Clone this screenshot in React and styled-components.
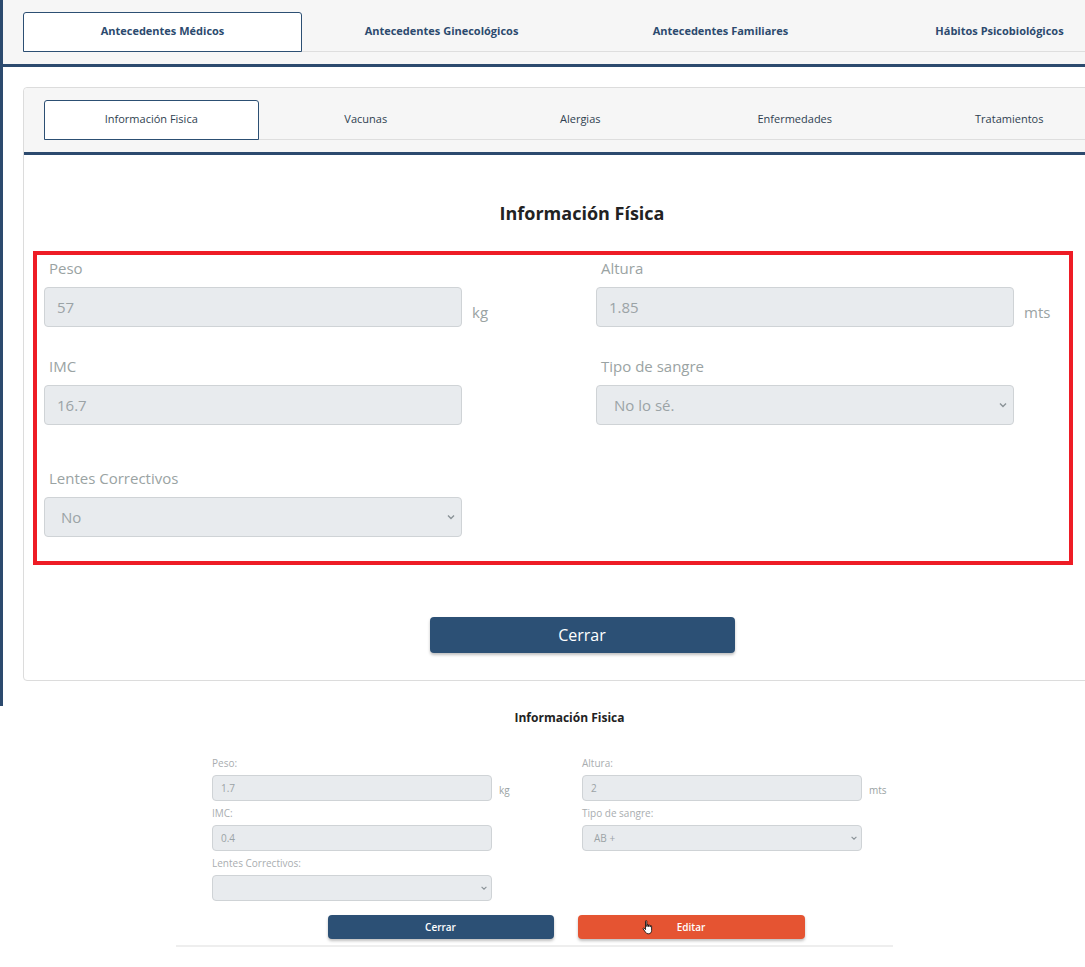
import React from "react";
import styled, { createGlobalStyle } from "styled-components";

const GlobalStyle = createGlobalStyle`
  html, body {
    margin: 0;
    padding: 0;
    background: #fff;
    overflow: hidden;
  }
  body {
    font-family: "Open Sans", "Liberation Sans", sans-serif;
  }
`;

const Page = styled.div`
  width: 1085px;
  height: 967px;
  overflow: hidden;
  background: #fff;
`;

const MainPanel = styled.div`
  width: 1156px;
  border-left: 3px solid #2c4a6e;
  padding-bottom: 25px;
`;

const TopBar = styled.div`
  background: #f6f6f6;
  padding: 12px 20px 0;
  border-bottom: 12px solid #f6f6f6;
  height: 40px;
`;

const TabList = styled.div`
  display: flex;
  border-bottom: 1px solid #dedede;
  height: 39px;
`;

const Tab = styled.div`
  flex: 0 0 ${(p) => p.$w}px;
  display: flex;
  align-items: center;
  justify-content: center;
  box-sizing: border-box;
  padding-bottom: 3px;
  font-size: 11px;
  font-weight: ${(p) => (p.$bold ? 700 : 400)};
  color: ${(p) => (p.$bold ? "#2c4a6e" : "#2f3f50")};
  background: ${(p) => (p.$active ? "#fff" : "transparent")};
  border: 1px solid ${(p) => (p.$active ? "#2c4f73" : "transparent")};
  border-radius: 3px 3px 0 0;
  margin-bottom: -1px;
`;

const BlueRule = styled.div`
  height: 3px;
  background: #2c4a6e;
`;

const Body = styled.div`
  padding: 20px 20px 0;
`;

const Card = styled.div`
  width: 1116px;
  border: 1px solid #dcdcdc;
  border-radius: 4px;
  background: #fff;
  padding-bottom: 27px;
`;

const CardHeader = styled.div`
  background: #f6f6f6;
  padding: 12px 0 0 20px;
  border-bottom: 12px solid #f6f6f6;
  border-radius: 4px 4px 0 0;
`;

const SectionTitle = styled.h2`
  margin: 46px 0 0;
  text-align: center;
  font-size: 18px;
  font-weight: 700;
  color: #222;
  line-height: 24px;
`;

const FormBox = styled.div`
  margin: 26px 0 0 9px;
  width: 1040px;
  box-sizing: border-box;
  border: 4px solid #ee1c25;
  padding: 3px 0 24px 7px;
  display: grid;
  grid-template-columns: 552px 1fr;
  row-gap: ${(p) => p.$gap}px;
`;

const Field = styled.div`
  display: flex;
  flex-direction: column;
  margin-top: ${(p) => p.$mt || 0}px;
`;

const Label = styled.label`
  font-size: ${(p) => (p.$small ? 10 : 15)}px;
  line-height: ${(p) => (p.$small ? 12 : 20)}px;
  color: ${(p) => (p.$small ? "#a9adb0" : "#9aa3a3")};
  padding-left: ${(p) => (p.$small ? 0 : 5)}px;
  margin-bottom: ${(p) => (p.$small ? 6 : 9)}px;
`;

const InputRow = styled.div`
  display: flex;
  align-items: flex-end;
`;

const Control = styled.div`
  width: ${(p) => p.$w}px;
  height: ${(p) => p.$h}px;
  box-sizing: border-box;
  background: #e8ebee;
  border: 1px solid #cfd3d6;
  border-radius: 4px;
  display: flex;
  align-items: center;
  justify-content: space-between;
  padding-right: ${(p) => (p.$small ? 3 : 5)}px;
  padding-left: ${(p) => p.$pl}px;
  font-size: ${(p) => (p.$small ? 10 : 15)}px;
  color: #9ba3a6;
`;

const Unit = styled.span`
  font-size: ${(p) => (p.$small ? 10 : 15)}px;
  color: #9aa3a3;
  margin-left: ${(p) => (p.$small ? 7 : 10)}px;
  padding-bottom: ${(p) => (p.$small ? 4 : 5)}px;
`;

const Chevron = ({ size = 10 }) => (
  <svg width={size} height={size} viewBox="0 0 10 10">
    <path d="M2 3.5 L5 6.5 L8 3.5" fill="none" stroke="#8a9297" strokeWidth="1.4" />
  </svg>
);

const ButtonRow = styled.div`
  display: flex;
  justify-content: center;
  gap: 24px;
  margin-top: ${(p) => p.$mt}px;
  padding-left: ${(p) => p.$pl || 0}px;
`;

const Button = styled.button`
  width: ${(p) => p.$w}px;
  height: ${(p) => p.$h}px;
  border: none;
  border-radius: 4px;
  background: ${(p) => (p.$danger ? "#e55432" : "#2c5075")};
  color: #fff;
  font-family: inherit;
  font-size: ${(p) => p.$fs}px;
  font-weight: ${(p) => (p.$small ? 600 : 500)};
  box-shadow: 0 2px 3px rgba(0, 0, 0, 0.25);
  position: relative;
  cursor: pointer;
`;

const Cursor = styled.span`
  position: absolute;
  left: 64px;
  top: 5px;
  line-height: 0;
`;

const Mini = styled.div`
  width: 717px;
  margin: 4px 0 0 176px;
  border-bottom: 2px solid #eeeeee;
  padding-bottom: 6px;
`;

const MiniTitle = styled.div`
  text-align: center;
  padding-left: 70px;
  font-size: 12px;
  font-weight: 700;
  color: #222;
  line-height: 16px;
`;

const MiniForm = styled.div`
  margin-top: 31px;
  padding-left: 36px;
  display: grid;
  grid-template-columns: 370px 1fr;
  row-gap: 6px;
`;

const HandIcon = () => (
  <svg width="12" height="15" viewBox="0 0 12 15">
    <path
      d="M3.5 1.2c0-.7 1.3-.7 1.3 0v5.3h.3V5c0-.7 1.3-.7 1.3 0v1.5h.3V5.6c0-.7 1.3-.7 1.3 0v1.2h.3v-.6c0-.7 1.3-.7 1.3 0v4.3c0 1.7-1.1 3.3-2.8 3.3H6c-1 0-1.8-.6-2.4-1.5L1.2 9c-.4-.6.4-1.3 1-.8l1.3 1.4z"
      fill="#fff"
      stroke="#000"
      strokeWidth="0.8"
      strokeLinejoin="round"
    />
  </svg>
);

const topTabs = [
  "Antecedentes Médicos",
  "Antecedentes Ginecológicos",
  "Antecedentes Familiares",
  "Hábitos Psicobiológicos",
];

const innerTabs = ["Información Fisica", "Vacunas", "Alergias", "Enfermedades", "Tratamientos"];

export default function App() {
  return (
    <Page>
      <GlobalStyle />
      <MainPanel>
        <TopBar>
          <TabList>
            {topTabs.map((t, i) => (
              <Tab key={t} $w={279} $bold $active={i === 0}>
                {t}
              </Tab>
            ))}
          </TabList>
        </TopBar>
        <BlueRule />
        <Body>
          <Card>
            <CardHeader>
              <TabList>
                {innerTabs.map((t, i) => (
                  <Tab key={t} $w={214.5} $active={i === 0}>
                    {t}
                  </Tab>
                ))}
              </TabList>
            </CardHeader>
            <BlueRule />
            <SectionTitle>Información Física</SectionTitle>
            <FormBox $gap={29}>
              <Field>
                <Label>Peso</Label>
                <InputRow>
                  <Control $w={418} $h={40} $pl={12}>57</Control>
                  <Unit>kg</Unit>
                </InputRow>
              </Field>
              <Field>
                <Label>Altura</Label>
                <InputRow>
                  <Control $w={418} $h={40} $pl={12}>1.85</Control>
                  <Unit>mts</Unit>
                </InputRow>
              </Field>
              <Field>
                <Label>IMC</Label>
                <InputRow>
                  <Control $w={418} $h={40} $pl={12}>16.7</Control>
                </InputRow>
              </Field>
              <Field>
                <Label>Tipo de sangre</Label>
                <InputRow>
                  <Control $w={418} $h={40} $pl={17}>
                    No lo sé.
                    <Chevron />
                  </Control>
                </InputRow>
              </Field>
              <Field $mt={14}>
                <Label>Lentes Correctivos</Label>
                <InputRow>
                  <Control $w={418} $h={40} $pl={16}>
                    No
                    <Chevron />
                  </Control>
                </InputRow>
              </Field>
            </FormBox>
            <ButtonRow $mt={52}>
              <Button $w={305} $h={36} $fs={16}>
                Cerrar
              </Button>
            </ButtonRow>
          </Card>
        </Body>
      </MainPanel>

      <Mini>
        <MiniTitle>Información Fisica</MiniTitle>
        <MiniForm>
          <Field>
            <Label $small>Peso:</Label>
            <InputRow>
              <Control $small $w={280} $h={26} $pl={8}>1.7</Control>
              <Unit $small>kg</Unit>
            </InputRow>
          </Field>
          <Field>
            <Label $small>Altura:</Label>
            <InputRow>
              <Control $small $w={280} $h={26} $pl={8}>2</Control>
              <Unit $small>mts</Unit>
            </InputRow>
          </Field>
          <Field>
            <Label $small>IMC:</Label>
            <InputRow>
              <Control $small $w={280} $h={26} $pl={8}>0.4</Control>
            </InputRow>
          </Field>
          <Field>
            <Label $small>Tipo de sangre:</Label>
            <InputRow>
              <Control $small $w={280} $h={26} $pl={11}>
                AB +
                <Chevron size={8} />
              </Control>
            </InputRow>
          </Field>
          <Field>
            <Label $small>Lentes Correctivos:</Label>
            <InputRow>
              <Control $small $w={280} $h={26} $pl={11}>
                <span />
                <Chevron size={8} />
              </Control>
            </InputRow>
          </Field>
        </MiniForm>
        <ButtonRow $mt={14} $pl={63}>
          <Button $small $w={226} $h={24} $fs={10}>
            Cerrar
          </Button>
          <Button $small $danger $w={227} $h={24} $fs={10}>
            Editar
            <Cursor>
              <HandIcon />
            </Cursor>
          </Button>
        </ButtonRow>
      </Mini>
    </Page>
  );
}
